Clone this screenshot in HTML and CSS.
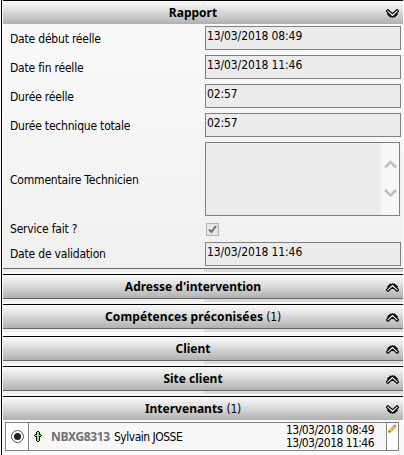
FILE: index.html
```html
<!DOCTYPE html>
<html lang="fr">
<head>
<meta charset="utf-8">
<title>Rapport</title>
<link rel="stylesheet" href="styles.css">
</head>
<body>
<svg class="defs" width="0" height="0">
  <symbol id="chevrons" viewBox="0 0 13 9">
    <path fill="#fff" d="M1 1h2L6.500 4.500L10 1h2v2L7.500 8h-2L1 3z"/>
    <path fill="none" stroke="#000" stroke-width="1.200" d="M.8 1.200L2 .8L6.500 4.600L11 .8L12.200 1.200"/>
    <path fill="none" stroke="#000" stroke-width="1.200" d="M.6 1.200V2.400L6.500 8.200L12.400 2.400V1.200"/>
    <path fill="none" stroke="#000" stroke-width="1.200" d="M1.300 4.700L5 8.200M11.700 4.700L8 8.200"/>
  </symbol>
</svg>
<main class="panel">
  <section class="report">
    <h2 class="bar"><span><b>Rapport</b></span><svg class="chev"><use href="#chevrons"/></svg></h2>
    <div class="form">
      <div class="row"><label>Date début réelle</label><div class="field">13/03/2018 08:49</div></div>
      <div class="row"><label>Date fin réelle</label><div class="field">13/03/2018 11:46</div></div>
      <div class="row"><label>Durée réelle</label><div class="field">02:57</div></div>
      <div class="row"><label>Durée technique totale</label><div class="field">02:57</div></div>
      <div class="row comment"><label>Commentaire Technicien</label>
        <div class="area"><div class="scroll">
          <svg width="13" height="10"><path d="M1 8.500L6.500 3L12 8.500"/></svg>
          <svg width="13" height="10"><path d="M1 2L6.500 7.500L12 2"/></svg>
        </div></div>
      </div>
      <div class="row service"><label>Service fait ?</label>
        <div class="check"><svg width="11" height="11"><path d="M2 5.500L4.500 8L9 2"/></svg></div>
      </div>
      <div class="row last"><label>Date de validation</label><div class="field">13/03/2018 11:46</div></div>
    </div>
  </section>
  <div class="gap"></div>
  <section class="closed"><h2 class="bar"><span><b>Adresse d'intervention</b></span><svg class="chev up"><use href="#chevrons"/></svg></h2></section>
  <div class="gap"></div>
  <section class="closed"><h2 class="bar"><span><b class="wide">Compétences préconisées</b> (1)</span><svg class="chev up"><use href="#chevrons"/></svg></h2></section>
  <div class="gap tall"></div>
  <section class="closed"><h2 class="bar"><span><b>Client</b></span><svg class="chev up"><use href="#chevrons"/></svg></h2></section>
  <div class="gap"></div>
  <section class="closed"><h2 class="bar"><span><b>Site client</b></span><svg class="chev up"><use href="#chevrons"/></svg></h2></section>
  <div class="gap"></div>
  <section class="people">
    <h2 class="bar"><span><b>Intervenants</b> (1)</span><svg class="chev"><use href="#chevrons"/></svg></h2>
    <div class="person">
      <div class="pick"><svg width="13" height="13"><circle cx="6.500" cy="6.500" r="6" fill="#fff" stroke="#555"/><circle cx="6.500" cy="6.500" r="3.500" fill="#222"/></svg></div>
      <div class="who">
        <svg width="8" height="11" shape-rendering="crispEdges"><path fill="#9be765" d="M3 1h2v2h-2zM1 4h6v1h-6zM3 3h2v7h-2z"/><path d="M3 0h2v1h-2zM2 1h1v2h-1zM5 1h1v2h-1zM1 3h2v1h-2zM5 3h2v1h-2zM0 4h1v1h-1zM7 4h1v1h-1zM1 5h2v1h-2zM5 5h2v1h-2zM2 6h1v4h-1zM5 6h1v4h-1zM3 10h2v1h-2z"/></svg>
        <b>NBXG8313</b><span class="name">Sylvain JOSSE</span>
      </div>
      <div class="dates"><div>13/03/2018 08:49</div><div>13/03/2018 11:46</div></div>
      <div class="edit"><svg width="9" height="9"><path d="M1 8L1.500 5.500L5.500 1.500L7.500 3.500L3.500 7.500Z" fill="#f5bd3c" stroke="#b98224" stroke-width=".5"/><path d="M5.500 1.500L7 .3L8.500 2L7.500 3.500Z" fill="#ee7770"/><path d="M.5 8.500V6.500L2.500 8.500Z" fill="#332b20"/></svg></div>
    </div>
  </section>
</main>
</body>
</html>
```
FILE: styles.css
```css
* { box-sizing: border-box; }
body {
  margin: 0;
  height: 455px;
  overflow: hidden;
  background: #fafafa;
  color: #000;
  font: 12px/15px "DejaVu Sans Condensed", "DejaVu Sans", sans-serif;
  font-stretch: condensed;
  letter-spacing: -.2px;
}
.defs { display: block; height: 0; }
svg { display: block; flex: none; }
.panel {
  height: 455px;
  margin-left: 1px;
  padding: 0 1px;
  border-left: 1px solid #000;
}
.bar {
  display: flex;
  align-items: center;
  height: 24px;
  margin: 0;
  padding: 1px 4px 0 0;
  border-top: 1px solid #000;
  background: linear-gradient(#fafafa, #dcdcdc 45%, #b0b0b0);
  font-size: 12px;
  font-weight: normal;
}
.bar span { flex: 1; padding-right: 3px; text-align: center; }
.bar b {
  font-family: "Noto Sans", sans-serif;
  font-stretch: normal;
  letter-spacing: 0;
}
.bar .wide { letter-spacing: .1px; }
.chev { width: 13px; height: 9px; }
.up { transform: scaleY(-1); }
.report { height: 269px; border-bottom: 1px solid #666; }
.form {
  display: grid;
  grid-template-rows: 29px 29px 29px 29px 79px 21px 24px;
  height: 244px;
  padding-top: 2px;
  background: linear-gradient(#fafafa, #f0f0f0);
}
.row {
  display: grid;
  grid-template-columns: 201px 196px;
  align-items: start;
  padding-left: 1px;
}
.row label { padding: 6px 0 0 6px; }
.field {
  height: 24px;
  padding: 2px 1px;
  border: 1px solid #808080;
  background: #ececec;
  letter-spacing: -.1px;
}
.comment label { padding-top: 31px; }
.last label { padding-top: 5px; }
.area {
  display: flex;
  justify-content: flex-end;
  width: 195px;
  height: 74px;
  border: 1px solid #808080;
  background: #ececec;
}
.scroll {
  display: flex;
  flex-direction: column;
  gap: 19px;
  width: 18px;
  padding: 16px 0 0 3px;
  background: #f8f8f8;
}
.scroll path { fill: none; stroke: #c0c0c0; stroke-width: 2.6; }
.service label { padding-top: 1px; }
.check {
  width: 13px;
  height: 13px;
  margin: 2px 0 0 1px;
  border: 1px solid #b5b5b5;
  background: #e6e6e6;
}
.check path { fill: none; stroke: #707070; stroke-width: 2; }
.closed { height: 25px; border-bottom: 1px solid #666; }
.gap {
  height: 5px;
  background: linear-gradient(90deg, #eee 201px, #dcdcdc 201px) 0 0 / 100% 3px no-repeat;
}
.gap.tall { height: 7px; }
.person {
  display: flex;
  width: 394px;
  height: 29px;
  margin: 2px 0 0 2px;
  border: 1px solid #808080;
  background: #f8f8f8;
}
.pick {
  display: grid;
  place-items: center;
  width: 23px;
  border-right: 1px solid #808080;
  background: #fff;
}
.who { display: flex; flex: 1; align-items: center; padding-left: 5px; }
.who b {
  width: 63px;
  margin-left: 9px;
  color: #707070;
  font-family: "Noto Sans", sans-serif;
  letter-spacing: -.35px;
}
.name { padding-top: 1px; letter-spacing: -.5px; }
.dates { padding: 1px 12px 0 0; line-height: 13px; letter-spacing: -.55px; }
.edit { width: 12px; padding: 1px; border-left: 1px solid #808080; background: #fff; }
```
